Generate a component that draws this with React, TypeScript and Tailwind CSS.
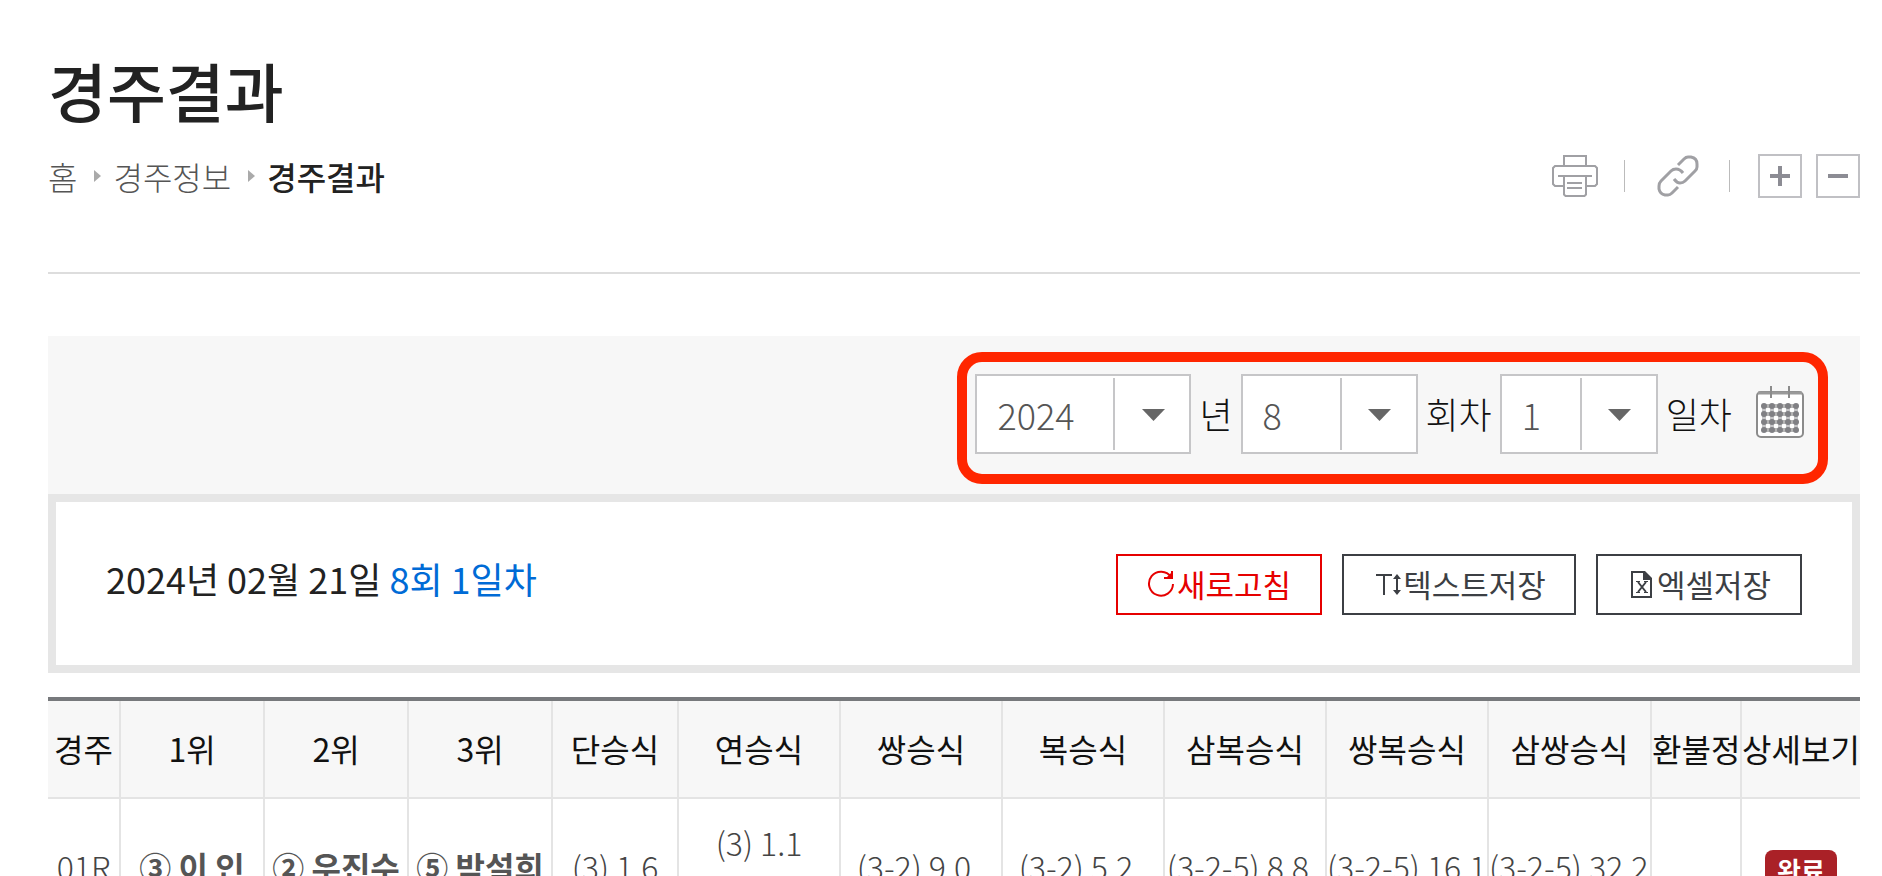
import { useState } from "react";

const iconColor = "#a0a0a4";

const PrinterIcon = () => (
  <svg width="46" height="42" viewBox="0 0 46 42" fill="none" stroke={iconColor} strokeWidth="2">
    <path d="M12 11V1h22v10" />
    <path d="M11 31H3l-2-2V13l2-2h40l2 2v16l-2 2h-8" />
    <path d="M6 21h34" />
    <path d="M12 21h22v18.5l-1.500 1.500h-19L12 39.500z" />
    <path d="M15 28h15M15 33h15" />
  </svg>
);

const LinkIcon = () => (
  <svg width="42" height="42" viewBox="0 0 42 42" fill="none" stroke={iconColor} strokeWidth="3">
    <path d="M21 10l6-6q2-2 4-2h3q6 1 6 7v3q0 2-2 4L28 26q-2 2-5 2t-6-4" />
    <path d="M26 18q-3-4-7-4-3 0-5 2L4 26q-2 2-2 5v3q1 5 6 6h3q2 0 4-2l6-6" />
  </svg>
);

const CalendarIcon = () => (
  <svg width="48" height="52" viewBox="0 0 48 52" fill="none">
    <rect x="1" y="6" width="46" height="45" rx="4" fill="#fff" stroke="#8c8c8c" strokeWidth="2" />
    <path d="M2 7h44" stroke="#9a9a9a" strokeWidth="3" />
    <path d="M15 0v12M33 0v12" stroke="#8c8c8c" strokeWidth="2" />
    {[20, 28, 36, 44].map((y) => (
      <g key={y}>
        <path d={`M6 ${y}h36`} stroke="#b4b4b4" strokeWidth="4" />
        {[8, 16, 24, 32, 40].map((x) => (
          <circle key={x} cx={x} cy={y} r="3" fill="#808084" />
        ))}
      </g>
    ))}
    <path d="M8 18v28M16 18v28M24 18v28M32 18v28M40 18v28" stroke="#808084" strokeOpacity=".45" strokeWidth="4" />
  </svg>
);

const RefreshIcon = () => (
  <svg width="28" height="28" viewBox="0 0 28 28" fill="none" stroke="currentColor" strokeWidth="2">
    <path d="M24 7A12 12 0 1 0 26 14" />
    <path d="M25 1v7h-8" />
    <path d="M25 2v6h-6z" fill="currentColor" stroke="none" />
  </svg>
);

const TextIcon = () => (
  <svg width="27" height="24" viewBox="0 0 27 24" fill="none" stroke="currentColor" strokeWidth="2">
    <path d="M0 3h16M8 3v20" />
    <path d="M21 6v13" />
    <path d="M21 2l4 5h-8zM21 23l4-5h-8z" fill="currentColor" stroke="none" />
  </svg>
);

const ExcelIcon = () => (
  <svg width="22" height="28" viewBox="0 0 22 28" fill="none" stroke="currentColor" strokeWidth="2">
    <path d="M13 2H1v25h19V8" />
    <path d="M12 1h2l7 7v2h-9z" fill="currentColor" stroke="none" />
    <path d="M7 12l8 10M15 12L7 22" strokeWidth="2" />
    <path d="M5 11.500h4M13 11.500h4M5 22.500h4M13 22.500h4" strokeWidth="1" />
  </svg>
);

const CrumbArrow = () => (
  <svg width="7" height="12" viewBox="0 0 7 12" fill="#aaa">
    <path d="M0 0l7 6-7 6z" />
  </svg>
);

type PickerProps = {
  id: string;
  label: string;
  options: string[];
  width: string;
};

const Picker = ({ id, label, options, width }: PickerProps) => {
  const [value, setValue] = useState(options[0]);

  return (
    <>
      <div className={`relative h-20 ${width}`}>
        <select
          id={id}
          value={value}
          onChange={(e) => setValue(e.target.value)}
          className="h-full w-full appearance-none border-2 border-[#c6c6c8] bg-white pl-5 font-light text-[#555]"
        >
          {options.map((o) => (
            <option key={o}>{o}</option>
          ))}
        </select>
        <div className="pointer-events-none absolute inset-y-1 right-0 flex w-[78px] items-center justify-center border-l-2 border-[#c6c6c8] pt-0.5">
          <svg width="23" height="12" viewBox="0 0 23 12" fill="#666">
            <path d="M0 0h23L11.500 12z" />
          </svg>
        </div>
      </div>
      <label htmlFor={id} className="pb-0.5 font-light text-[#111]">
        {label}
      </label>
    </>
  );
};

const columns = [
  { name: "경주", width: "w-[73px]" },
  { name: "1위", width: "w-[144px]" },
  { name: "2위", width: "w-[144px]" },
  { name: "3위", width: "w-[144px]" },
  { name: "단승식", width: "w-[126px]" },
  { name: "연승식", width: "w-[162px]" },
  { name: "쌍승식", width: "w-[162px]" },
  { name: "복승식", width: "w-[162px]" },
  { name: "삼복승식", width: "w-[162px]" },
  { name: "쌍복승식", width: "w-[162px]" },
  { name: "삼쌍승식", width: "w-[163px]" },
  { name: "환불정", width: "w-[90px]" },
  { name: "상세보기", width: "w-[118px]" },
];

const race = {
  no: "01R",
  ranks: ["③ 이 인", "② 우진수", "⑤ 박설희"],
  win: "(3) 1.6",
  place: ["(3) 1.1", "(2) 1.3"],
  odds: ["(3-2) 9.0", "(3-2) 5.2", "(3-2-5) 8.8", "(3-2-5) 16.1", "(3-2-5) 32.2"],
};

const App = () => {
  return (
    <div className="h-screen overflow-hidden bg-white pr-[22px] pl-12 font-['Noto_Sans_CJK_KR','Noto_Sans',sans-serif] text-[#222]">
      {/* Title and breadcrumb */}
      <header className="border-b-2 border-[#ddd] pt-11 pb-[74px]">
        <h1 className="text-[64px] leading-[90px] font-medium">경주결과</h1>
        <div className="mt-5 flex h-11 items-center justify-between">
          <nav className="flex items-center text-[32px] leading-[44px] font-light text-[#555]">
            <a href="#home">홈</a>
            <span className="pr-3 pl-[17px]"><CrumbArrow /></span>
            <a href="#info">경주정보</a>
            <span className="pr-3 pl-[17px]"><CrumbArrow /></span>
            <a href="#result" className="font-medium text-[#222]">경주결과</a>
          </nav>
          <div className="flex items-center">
            <button aria-label="인쇄"><PrinterIcon /></button>
            <span className="mr-8 ml-[26px] h-8 w-px bg-[#bbb]" />
            <button aria-label="링크 복사"><LinkIcon /></button>
            <span className="mr-7 ml-[30px] h-8 w-px bg-[#bbb]" />
            <button aria-label="확대" className="flex size-11 items-center justify-center border-2 border-[#c0c0c4]">
              <svg width="20" height="20" viewBox="0 0 20 20" stroke="#8c8c94" strokeWidth="4">
                <path d="M0 10h20M10 0v20" />
              </svg>
            </button>
            <button aria-label="축소" className="ml-3.5 flex size-11 items-center justify-center border-2 border-[#c0c0c4]">
              <svg width="20" height="20" viewBox="0 0 20 20" stroke="#8c8c94" strokeWidth="4">
                <path d="M0 10h20" />
              </svg>
            </button>
          </div>
        </div>
      </header>

      {/* Date filter */}
      <div className="mt-[62px] flex justify-end bg-[#f7f7f7] pt-4 pr-8 pb-2.5">
        <form className="flex items-center gap-2 rounded-[25px] border-10 border-[#ff2600] pt-3 pr-3.5 pb-5 pl-2 text-[36px] leading-[52px]">
          <Picker id="year" label="년" options={["2024", "2023"]} width="w-[216px]" />
          <Picker id="round" label="회차" options={["8", "7"]} width="w-[177px]" />
          <Picker id="day" label="일차" options={["1", "2", "3"]} width="w-[158px]" />
          <button type="button" aria-label="달력" className="ml-4 pb-1"><CalendarIcon /></button>
        </form>
      </div>

      {/* Selected day and actions */}
      <div className="flex items-center justify-between border-8 border-[#e6e6e6] px-[50px] pt-[52px] pb-[50px]">
        <p className="pb-3 text-[36px] leading-[47px]">
          2024년 02월 21일 <span className="text-[#006bd6]">8회 1일차</span>
        </p>
        <div className="flex gap-5 text-[31px] leading-[57px]">
          <button className="flex h-[61px] w-[206px] items-center justify-center gap-0.5 border-2 border-[#e60000] pb-0.5 text-[#e60000]">
            <RefreshIcon />새로고침
          </button>
          <button className="flex h-[61px] w-[234px] items-center justify-center border-2 border-[#3c3f44] pb-0.5 pl-1 text-[#3c3f44]">
            <TextIcon />텍스트저장
          </button>
          <button className="flex h-[61px] w-[206px] items-center justify-center gap-1 border-2 border-[#3c3f44] pb-0.5 pl-1 text-[#3c3f44]">
            <ExcelIcon />엑셀저장
          </button>
        </div>
      </div>

      <table className="mt-6 w-full table-fixed border-separate border-spacing-0 border-t-4 border-[#77797c] text-center text-[32px] leading-[47px] whitespace-nowrap">
        <thead>
          <tr>
            {columns.map((c) => (
              <th
                key={c.name}
                className={`h-[98px] border-r-2 border-b-2 border-[#e4e4e4] bg-[#f7f7f7] px-0 pt-0 pb-0.5 font-normal text-[#111] last:border-r-0 ${c.width}`}
              >
                {c.name}
              </th>
            ))}
          </tr>
        </thead>
        <tbody className="font-light text-[#444] [&_td]:border-r-2 [&_td]:border-b-2 [&_td]:border-[#e4e4e4] [&_td]:px-0 [&_td]:py-5 [&_td:last-child]:border-r-0">
          <tr>
            <td>{race.no}</td>
            {race.ranks.map((r) => (
              <td key={r} className="font-bold text-[#555]">{r}</td>
            ))}
            <td>{race.win}</td>
            <td>
              {race.place.map((p) => (
                <div key={p}>{p}</div>
              ))}
            </td>
            {race.odds.map((o) => (
              <td key={o}>{o}&nbsp;&nbsp;</td>
            ))}
            <td />
            <td>
              <a href="#detail" className="inline-block w-[72px] rounded-lg bg-[#aa2127] align-middle text-[26px] leading-10 font-bold text-white">
                완료
              </a>
            </td>
          </tr>
        </tbody>
      </table>
    </div>
  );
};

export default App;
